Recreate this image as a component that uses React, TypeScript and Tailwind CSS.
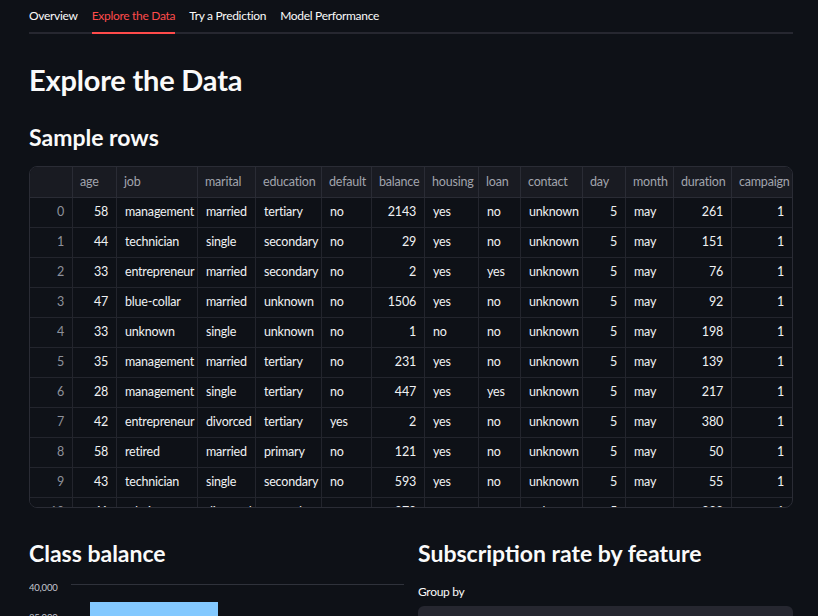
import React from "react";

const tabs = ["Overview", "Explore the Data", "Try a Prediction", "Model Performance"];

const columns = [
  { key: "", num: true },
  { key: "age", num: true },
  { key: "job", num: false },
  { key: "marital", num: false },
  { key: "education", num: false },
  { key: "default", num: false },
  { key: "balance", num: true },
  { key: "housing", num: false },
  { key: "loan", num: false },
  { key: "contact", num: false },
  { key: "day", num: true },
  { key: "month", num: false },
  { key: "duration", num: true },
  { key: "campaign", num: true },
];

const rows = [
  ["0", "58", "management", "married", "tertiary", "no", "2143", "yes", "no", "unknown", "5", "may", "261", "1"],
  ["1", "44", "technician", "single", "secondary", "no", "29", "yes", "no", "unknown", "5", "may", "151", "1"],
  ["2", "33", "entrepreneur", "married", "secondary", "no", "2", "yes", "yes", "unknown", "5", "may", "76", "1"],
  ["3", "47", "blue-collar", "married", "unknown", "no", "1506", "yes", "no", "unknown", "5", "may", "92", "1"],
  ["4", "33", "unknown", "single", "unknown", "no", "1", "no", "no", "unknown", "5", "may", "198", "1"],
  ["5", "35", "management", "married", "tertiary", "no", "231", "yes", "no", "unknown", "5", "may", "139", "1"],
  ["6", "28", "management", "single", "tertiary", "no", "447", "yes", "yes", "unknown", "5", "may", "217", "1"],
  ["7", "42", "entrepreneur", "divorced", "tertiary", "yes", "2", "yes", "no", "unknown", "5", "may", "380", "1"],
  ["8", "58", "retired", "married", "primary", "no", "121", "yes", "no", "unknown", "5", "may", "50", "1"],
  ["9", "43", "technician", "single", "secondary", "no", "593", "yes", "no", "unknown", "5", "may", "55", "1"],
  ["10", "41", "admin.", "divorced", "secondary", "no", "270", "yes", "no", "unknown", "5", "may", "222", "1"],
];

const gridCols =
  "grid grid-cols-[43px_44px_81px_58px_66px_50px_53px_54px_42px_62px_43px_48px_58px_1fr]";

const DataTable = () => {
  return (
    <div className="mt-[14px] h-[342px] overflow-hidden rounded-lg border border-[#2a2c35] bg-[#0e1117]">
      <div className={`${gridCols} h-[31px] bg-[#191b22] border-b border-[#2a2c35]`}>
        {columns.map((c, i) => (
          <div
            key={i}
            className={`flex items-center px-[7px] text-[12.5px] tracking-[-0.2px] text-[#a1a4ad] ${i < columns.length - 1 ? "border-r border-[#2a2c35]" : ""}`}
          >
            {c.key}
          </div>
        ))}
      </div>
      {rows.map((r, ri) => (
        <div key={ri} className={`${gridCols} h-[30px] border-b border-[#23252d]`}>
          {r.map((v, ci) => (
            <div
              key={ci}
              className={`flex items-center px-[8px] text-[12.5px] tracking-[-0.2px] ${columns[ci].num ? "justify-end" : "justify-start"} ${ci === 0 ? "text-[#8e919b] bg-[#0f1218]" : "text-[#f0f1f3]"} ${ci < r.length - 1 ? "border-r border-[#23252d]" : ""}`}
            >
              {v}
            </div>
          ))}
        </div>
      ))}
    </div>
  );
};

const ClassChart = () => {
  return (
    <svg width="375" height="70" className="block">
      <line x1="42" y1="16.5" x2="375" y2="16.5" stroke="#2f323b" strokeWidth="1" />
      <line x1="42" y1="49.5" x2="375" y2="49.5" stroke="#2f323b" strokeWidth="1" />
      <rect x="61" y="34" width="128" height="40" fill="#83c9ff" />
      <text x="0" y="22.5" fill="#c3c6ce" fontSize="9.5" letterSpacing="-0.2" fontFamily="Lato, sans-serif">
        40,000
      </text>
      <text x="0" y="52.5" fill="#c3c6ce" fontSize="9.5" letterSpacing="-0.2" fontFamily="Lato, sans-serif">
        35,000
      </text>
    </svg>
  );
};

export default function App() {
  return (
    <div className="min-h-screen w-full overflow-hidden bg-[#0e1117] pl-[29px] pr-[25px] font-['Lato',sans-serif] text-[#fafafa]">
      {/* tabs */}
      <div className="flex h-[34px] gap-[14px] border-b-2 border-[#262730]">
        {tabs.map((t, i) => (
          <div
            key={t}
            className={`-mb-[2px] flex h-[34px] items-center pb-[1px] text-[12px] tracking-[-0.3px] border-b-2 ${i === 1 ? "border-[#ff4b4b] text-[#ff4b4b]" : "border-transparent text-[#fafafa]"}`}
          >
            {t}
          </div>
        ))}
      </div>

      <h1 className="mt-[28px] text-[29px] font-bold leading-[36px] tracking-[-0.2px]">Explore the Data</h1>
      <h2 className="mt-[24px] text-[23px] font-bold leading-[30px]">Sample rows</h2>

      <DataTable />

      {/* lower section */}
      <div className="mt-[30px] grid grid-cols-2 gap-[14px]">
        <div>
          <h2 className="text-[23px] font-bold leading-[30px]">Class balance</h2>
          <ClassChart />
        </div>
        <div>
          <h2 className="text-[23px] font-bold leading-[30px]">Subscription rate by feature</h2>
          <div className="mt-[14px] text-[12px] tracking-[-0.3px] leading-[20px] text-[#fafafa]">Group by</div>
          <div className="mt-[4px] h-[40px] rounded-md bg-[#262730]" />
        </div>
      </div>
    </div>
  );
}
